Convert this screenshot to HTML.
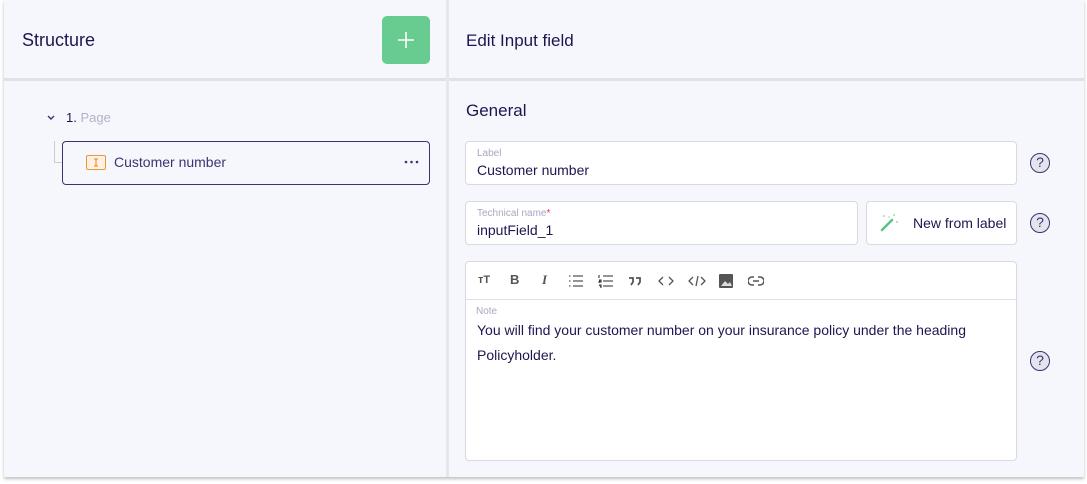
<!DOCTYPE html>
<html><head><meta charset="utf-8"><style>
*{box-sizing:border-box;margin:0;padding:0}
body{width:1087px;height:484px;background:#fff;font-family:"Liberation Sans",sans-serif;position:relative;overflow:hidden;color:#1c1650}
.card{position:absolute;left:4px;top:0;width:1080px;height:477px;background:#f6f7fc;box-shadow:0 2px 3px rgba(0,0,0,.25)}
.abs{position:absolute}
.hline{position:absolute;top:78px;height:3px;background:#dfe0e8}
.vdiv{position:absolute;left:442px;top:0;width:3px;height:477px;background:#e6e7ee}
.inp{position:absolute;background:#fff;border:1px solid #d9d8e4;border-radius:4px}
.lab{position:absolute;font-size:10px;color:#a9a6c0}
.val{position:absolute;font-size:14px;color:#1c1650}
.help{position:absolute;width:20px;height:20px;border:1.6px solid #3b3471;border-radius:50%;background:#e4e4ee;color:#3b3471;font-size:14px;text-align:center;line-height:17px}
.tb{position:absolute;top:272px;font-size:13px;color:#555;font-weight:bold}
</style></head><body>
<div class="card">
<div class="hline" style="left:0;width:442px"></div>
<div class="hline" style="left:445px;width:635px"></div>
<div class="vdiv"></div>
</div>
<div class="abs" style="left:22px;top:30px;font-size:18px">Structure</div>
<div class="abs" style="left:382px;top:16px;width:48px;height:48px;background:#68cb8f;border-radius:5px"></div>
<svg class="abs" style="left:396px;top:30px" width="20" height="20"><path d="M10 2v16M2 10h16" stroke="#fff" stroke-width="1.6"/></svg>
<svg class="abs" style="left:46px;top:114px" width="10" height="8"><path d="M2 2l3 3 3-3" stroke="#3b3471" stroke-width="1.4" fill="none"/></svg>
<div class="abs" style="left:66px;top:110px;font-size:13px"><span style="color:#1c1650">1.</span> <span style="color:#b3b1c9">Page</span></div>
<div class="abs" style="left:54px;top:141px;width:8px;height:22px;border-left:1px solid #ccc;border-bottom:1px solid #ccc"></div>
<div class="abs" style="left:62px;top:141px;width:368px;height:44px;border:1.3px solid #3b3273;border-radius:4px;background:#f6f7fc"></div>
<div class="abs" style="left:86px;top:155px;width:20px;height:15px;border:1.5px solid #f0953a;border-radius:2px;background:#fff2e4"></div>
<svg class="abs" style="left:86px;top:155px" width="20" height="15"><path d="M8 4h4M10 4v7M8 11h4" stroke="#f0953a" stroke-width="1.3"/></svg>
<div class="abs" style="left:114px;top:154px;font-size:14px;color:#3b3471">Customer number</div>
<svg class="abs" style="left:404px;top:159px" width="16" height="6"><circle cx="2" cy="3" r="1.3" fill="#3b3471"/><circle cx="7.5" cy="3" r="1.3" fill="#3b3471"/><circle cx="13" cy="3" r="1.3" fill="#3b3471"/></svg>

<div class="abs" style="left:466px;top:31px;font-size:17px">Edit Input field</div>
<div class="abs" style="left:466px;top:101px;font-size:17px">General</div>

<div class="inp" style="left:465px;top:141px;width:552px;height:44px"></div>
<div class="lab" style="left:477px;top:148px">Label</div>
<div class="val" style="left:477px;top:162px">Customer number</div>
<div class="help" style="left:1030px;top:153px">?</div>

<div class="inp" style="left:465px;top:201px;width:393px;height:44px"></div>
<div class="lab" style="left:477px;top:208px">Technical name<span style="color:#e33">*</span></div>
<div class="val" style="left:477px;top:222px">inputField_1</div>
<div class="inp" style="left:866px;top:201px;width:151px;height:44px"></div>
<svg class="abs" style="left:879px;top:213px" width="22" height="20"><path d="M3 17L13 7" stroke="#5ac582" stroke-width="2.5" stroke-linecap="round"/><circle cx="5" cy="3" r=".8" fill="#5ac582"/><circle cx="15" cy="2" r=".8" fill="#5ac582"/><circle cx="18" cy="9" r=".8" fill="#5ac582"/><circle cx="10" cy="4" r=".6" fill="#5ac582"/></svg>
<div class="abs" style="left:913px;top:215px;font-size:14px">New from label</div>
<div class="help" style="left:1030px;top:213px">?</div>

<div class="inp" style="left:465px;top:261px;width:552px;height:200px"></div>
<div class="abs" style="left:466px;top:299px;width:550px;height:1px;background:#e0dfe8"></div>
<div class="tb" style="left:478px;font-size:11px;top:274px">тT</div>
<div class="tb" style="left:510px">B</div>
<div class="tb" style="left:542px;font-style:italic;font-family:'Liberation Serif',serif">I</div>
<svg class="abs" style="left:568px;top:274px" width="16" height="14"><g stroke="#555" stroke-width="1.3"><path d="M5 2h10M5 7h10M5 12h10"/><path d="M1 2h1.5M1 7h1.5M1 12h1.5"/></g></svg>
<svg class="abs" style="left:598px;top:274px" width="16" height="14"><g stroke="#555" stroke-width="1.3"><path d="M5 2h10M5 7h10M5 12h10"/><path d="M1 1v3M1 6h2v2H1v1M1 11h2v3"/></g></svg>
<svg class="abs" style="left:628px;top:277px" width="14" height="9"><path d="M1 1h4v4l-2 3M8 1h4v4l-2 3" stroke="#555" stroke-width="1.8" fill="none"/></svg>
<svg class="abs" style="left:658px;top:275px" width="16" height="12"><path d="M5 2L1 6l4 4M11 2l4 4-4 4" stroke="#555" stroke-width="1.3" fill="none"/></svg>
<svg class="abs" style="left:688px;top:275px" width="18" height="12"><path d="M5 2L1 6l4 4M13 2l4 4-4 4M10 1L8 11" stroke="#555" stroke-width="1.3" fill="none"/></svg>
<svg class="abs" style="left:719px;top:274px" width="14" height="14"><rect width="14" height="14" rx="1" fill="#555"/><path d="M2 12l4-5 3 3 2-2 2 4z" fill="#ddd"/></svg>
<svg class="abs" style="left:748px;top:276px" width="16" height="10"><path d="M6 1H4a4 4 0 000 8h2M10 1h2a4 4 0 010 8h-2M5 5h6" stroke="#555" stroke-width="1.5" fill="none"/></svg>
<div class="lab" style="left:476px;top:306px">Note</div>
<div class="abs" style="left:477px;top:318px;font-size:14px;line-height:25px;color:#1c1650">You will find your customer number on your insurance policy under the heading<br>Policyholder.</div>
<div class="help" style="left:1030px;top:351px">?</div>
</body></html>
